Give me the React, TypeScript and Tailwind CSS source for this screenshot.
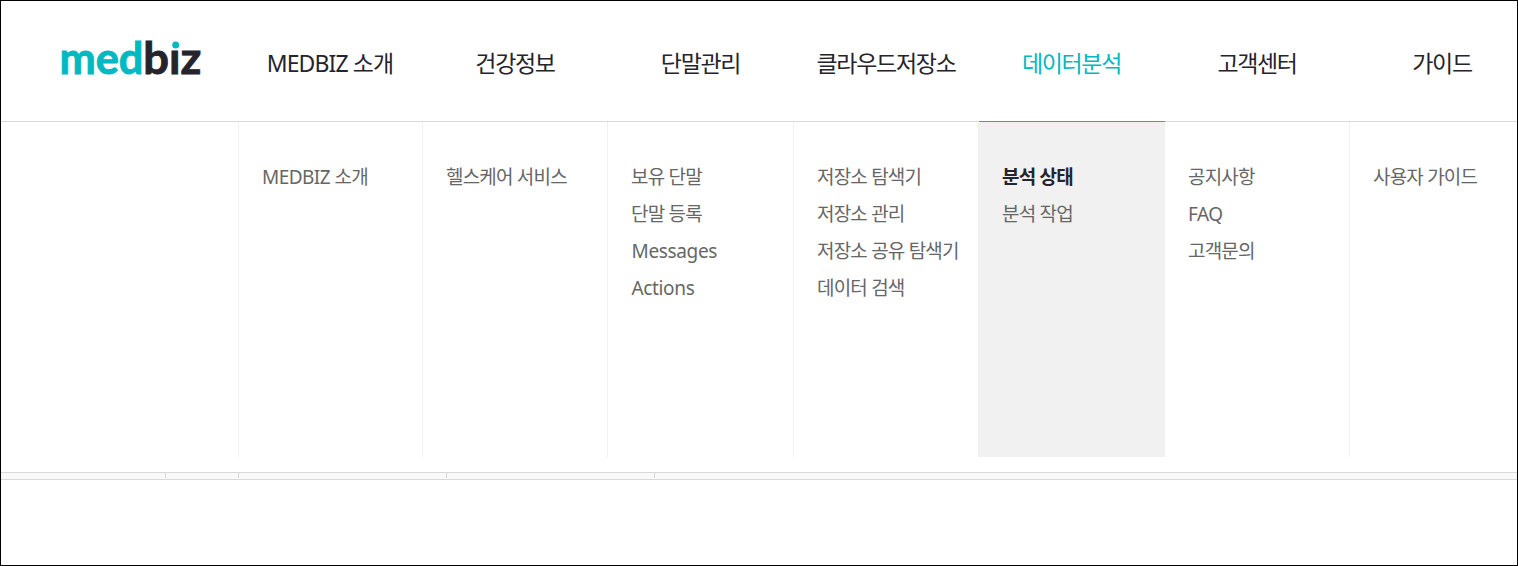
type MenuItem = { label: string; gap?: string; active?: boolean };
type Menu = {
  title: string;
  width: string;
  titleClass: string;
  items: MenuItem[];
  active?: boolean;
};

const menus: Menu[] = [
  {
    title: "MEDBIZ 소개",
    width: "w-[184px]",
    titleClass: "tracking-[-0.9px]",
    items: [{ label: "MEDBIZ 소개", gap: "tracking-[-0.55px]" }],
  },
  {
    title: "건강정보",
    width: "w-[185px]",
    titleClass: "tracking-[-1.3px] pl-[1px]",
    items: [{ label: "헬스케어 서비스" }],
  },
  {
    title: "단말관리",
    width: "w-[186px]",
    titleClass: "tracking-[-1.3px] pl-[1px]",
    items: [
      { label: "보유 단말" },
      { label: "단말 등록" },
      { label: "Messages", gap: "tracking-[-0.35px] pl-[0.5px]" },
      { label: "Actions", gap: "tracking-[-0.35px] pl-[0.5px]" },
    ],
  },
  {
    title: "클라우드저장소",
    width: "w-[185px]",
    titleClass: "tracking-[-1.3px] pl-[1px]",
    items: [
      { label: "저장소 탐색기" },
      { label: "저장소 관리" },
      { label: "저장소 공유 탐색기" },
      { label: "데이터 검색" },
    ],
  },
  {
    title: "데이터분석",
    width: "w-[187px]",
    titleClass: "tracking-[-1.4px]",
    active: true,
    items: [{ label: "분석 상태", active: true }, { label: "분석 작업" }],
  },
  {
    title: "고객센터",
    width: "w-[184px]",
    titleClass: "tracking-[-1.4px]",
    items: [{ label: "공지사항" }, { label: "FAQ", gap: "tracking-[-0.5px]" }, { label: "고객문의" }],
  },
  {
    title: "가이드",
    width: "w-[186px]",
    titleClass: "tracking-[-1.3px]",
    items: [{ label: "사용자 가이드" }],
  },
];

function Logo() {
  return (
    <svg
      width="150"
      height="64"
      viewBox="0 0 150 64"
      className="font-['Lato',sans-serif] text-[44px] font-bold"
      aria-label="medbiz"
    >
      <text x="3.4" y="47.5" textLength="84" lengthAdjust="spacingAndGlyphs" fill="#00b9c1" stroke="#00b9c1" strokeWidth="0.9">
        med
      </text>
      <text x="87.3" y="47.5" textLength="58" lengthAdjust="spacingAndGlyphs" fill="#25232b" stroke="#25232b" strokeWidth="0.9">
        biz
      </text>
      <rect x="114" y="12" width="11" height="12" fill="white" />
      <circle cx="119.7" cy="18.9" r="3.5" fill="#00b9c1" />
    </svg>
  );
}

export default function App() {
  return (
    <div className="flex h-[566px] w-[1518px] flex-col overflow-hidden border border-black bg-white font-['Noto_Sans','Noto_Sans_CJK_KR',sans-serif]">
      <header className="flex h-[120px] shrink-0">
        <div className="w-[237px] shrink-0 pt-[25px] pl-[55px]">
          <Logo />
        </div>
        {menus.map((m) => (
          <div
            key={m.title}
            className={`flex shrink-0 items-center justify-center pt-[5px] text-[23px] leading-none whitespace-nowrap ${m.width} ${m.titleClass} ${m.active ? "text-[#00b9c1]" : "text-[#25232b]"}`}
          >
            {m.title}
          </div>
        ))}
      </header>

      <nav className="flex h-[336px] shrink-0">
        <div className="w-[237px] shrink-0 border-t border-[#d9d9d9]" />
        {menus.map((m, i) => (
          <div key={m.title} className={`flex shrink-0 flex-col ${m.width}`}>
            <div className={`h-px shrink-0 ${m.active ? "ml-px bg-[#00b9c1]" : "bg-[#d9d9d9]"}`} />
            <ul
              className={`grow border-l pt-[37px] text-[19px] leading-[37px] whitespace-nowrap ${i === 5 ? "pl-[22px]" : "pl-[23px]"} ${m.active ? "border-[#f1f1f1] bg-[#f1f1f1]" : i === 5 ? "border-white" : "border-[#f1f1f1]"}`}
            >
              {m.items.map((item) => (
                <li
                  key={item.label}
                  className={`h-[37px] ${item.gap ?? "tracking-[-0.8px]"} ${item.active ? "font-bold text-[#25232b]" : "text-[#666]"}`}
                >
                  {item.label}
                </li>
              ))}
            </ul>
          </div>
        ))}
      </nav>

      <div className="mt-[15px] flex h-[8px] shrink-0 border-y border-[#d9d9d9] bg-[#f9f9f9]">
        <div className="h-[5px] w-[165px] border-r border-[#d9d9d9]" />
        <div className="h-[5px] w-[73px] border-r border-[#d9d9d9]" />
        <div className="h-[5px] w-[208px] border-r border-[#d9d9d9]" />
        <div className="h-[5px] w-[208px] border-r border-[#d9d9d9]" />
      </div>
    </div>
  );
}
